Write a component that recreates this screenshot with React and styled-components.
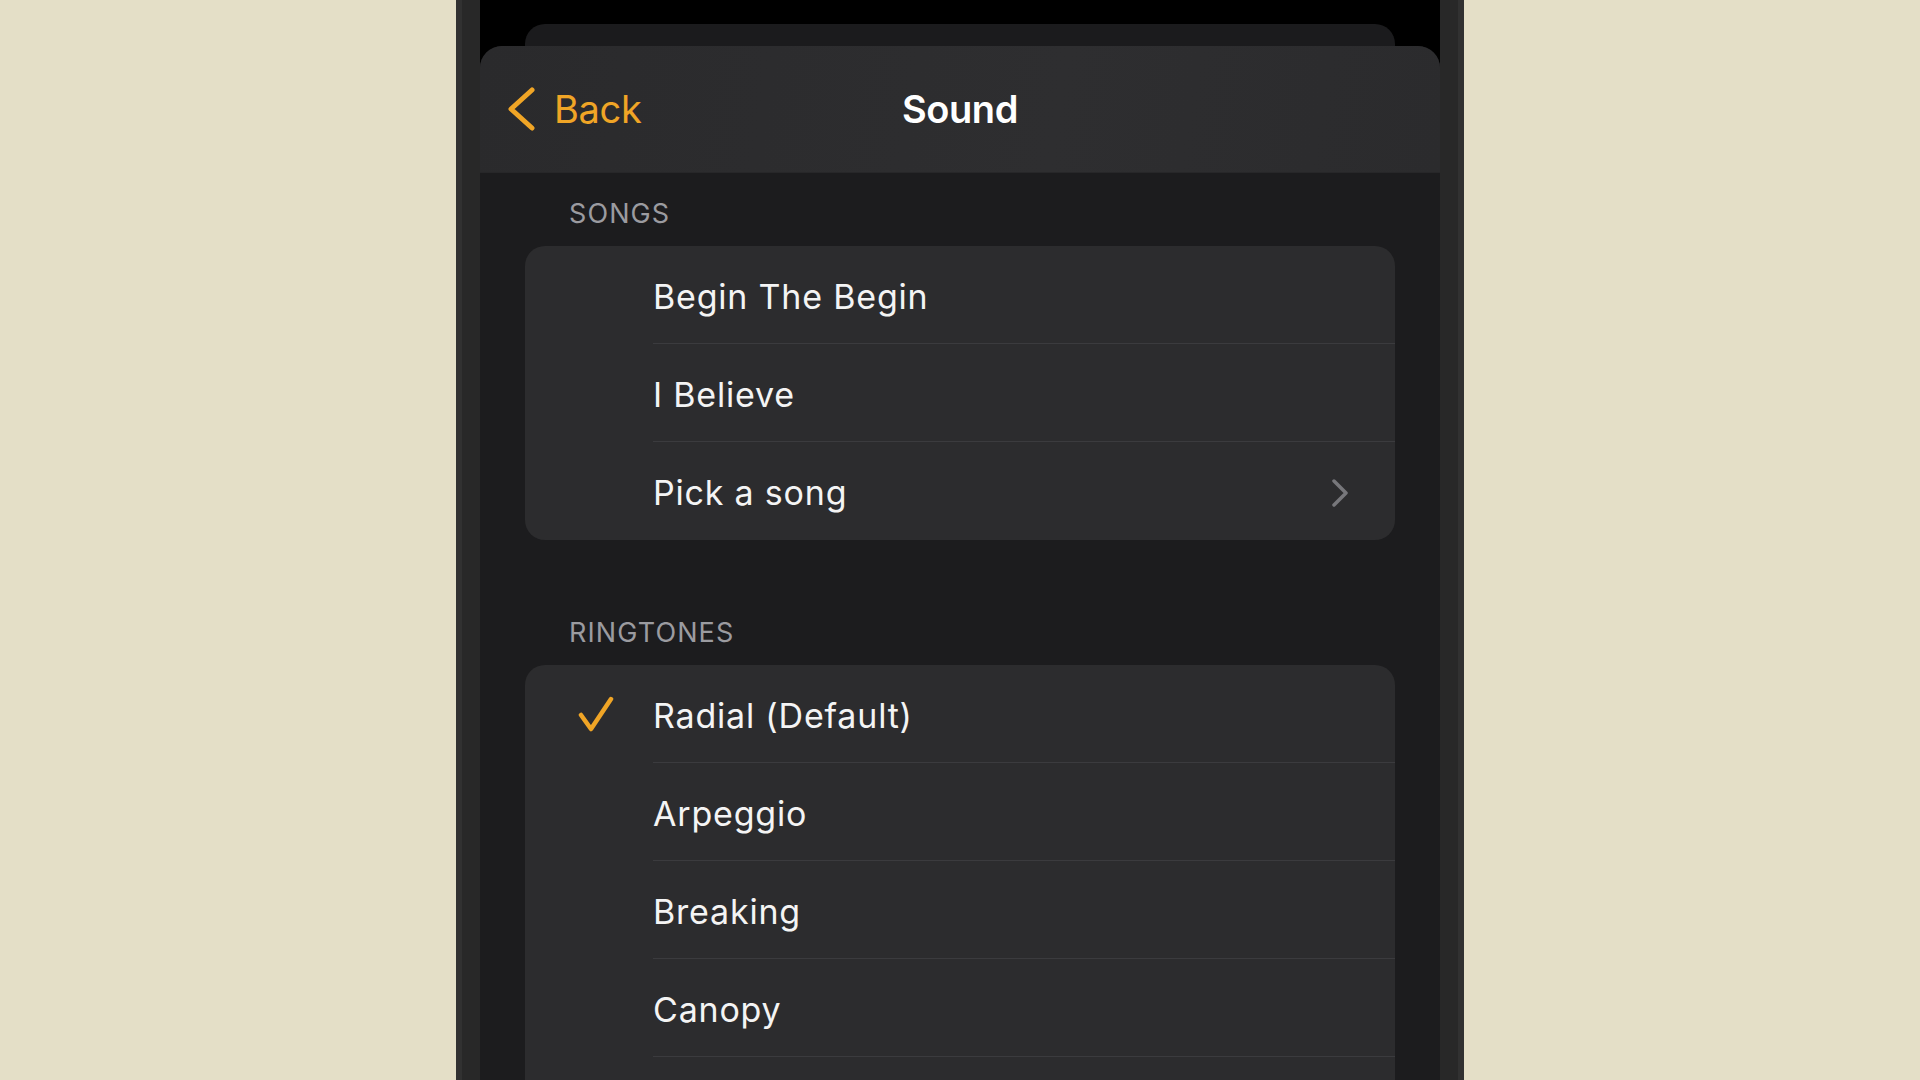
import React from "react";
import styled, { createGlobalStyle } from "styled-components";

const GlobalStyle = createGlobalStyle`
  html, body {
    margin: 0;
    padding: 0;
    background: #e4dfc7;
    font-family: Inter, "Noto Sans", "Liberation Sans", sans-serif;
    -webkit-font-smoothing: antialiased;
  }
  #root { height: 1080px; overflow: hidden; }
`;

const Page = styled.div`
  width: 1920px;
  height: 1080px;
  display: flex;
  justify-content: center;
  background: #e4dfc7;
  overflow: hidden;
`;

const PhoneFrame = styled.div`
  width: 1008px;
  height: 100%;
  box-sizing: border-box;
  padding: 0 24px;
  background: linear-gradient(
    to right,
    #313131 0 6px,
    #282828 6px calc(100% - 6px),
    #313131 calc(100% - 6px)
  );
`;

const Screen = styled.div`
  height: 100%;
  background: #000;
  display: flex;
  flex-direction: column;
  overflow: hidden;
`;

const StackedCard = styled.div`
  height: 22px;
  margin: 24px 45px 0;
  flex-shrink: 0;
  background: #1b1b1d;
  border-radius: 20px 20px 0 0;
`;

const Sheet = styled.div`
  flex: 1;
  display: flex;
  flex-direction: column;
  background: #1c1c1e;
  border-radius: 22px 22px 0 0;
  overflow: hidden;
`;

const NavBar = styled.header`
  height: 126px;
  flex-shrink: 0;
  position: relative;
  display: flex;
  align-items: center;
  justify-content: center;
  background: linear-gradient(100deg, #2a2a2c 0%, #2e2e30 60%, #2b2b2d 100%);
  box-shadow: 0 1px 0 rgba(255, 255, 255, 0.05);
`;

const BackButton = styled.button`
  position: absolute;
  left: 27px;
  top: 0;
  bottom: 0;
  display: flex;
  align-items: center;
  gap: 19px;
  padding: 0;
  border: 0;
  background: none;
  color: #f0a526;
  font-family: inherit;
  font-size: 38px;
  font-weight: 400;
  letter-spacing: -0.3px;
  cursor: pointer;
`;

const Title = styled.h1`
  margin: 0;
  color: #ffffff;
  font-size: 38px;
  font-weight: 600;
  letter-spacing: -0.4px;
`;

const Body = styled.div`
  padding: 25px 45px 0;
  display: flex;
  flex-direction: column;
`;

const SectionLabel = styled.div`
  margin: ${(p) => (p.$first ? "0" : "76px")} 0 15px 44px;
  height: 34px;
  line-height: 34px;
  font-size: 27px;
  color: #9b9ba0;
  letter-spacing: 1.1px;
`;

const Card = styled.div`
  background: #2c2c2e;
  border-radius: 20px;
  overflow: hidden;
  padding-bottom: ${(p) => (p.$continues ? "98px" : "0")};
`;

const Row = styled.div`
  display: flex;
  height: 98px;
`;

const MarkCell = styled.div`
  width: 128px;
  flex-shrink: 0;
  display: flex;
  align-items: center;
  padding-left: 53px;
  box-sizing: border-box;
`;

const RowContent = styled.div`
  flex: 1;
  display: flex;
  align-items: center;
  justify-content: space-between;
  padding: 3px 46px 0 0;
  box-sizing: border-box;
  border-bottom: ${(p) => (p.$divider ? "1px solid #3b3b3e" : "none")};
`;

const RowLabel = styled.span`
  color: #f4f4f4;
  font-size: 34px;
  letter-spacing: 0.8px;
`;

const BackChevron = () => (
  <svg width="28" height="44" viewBox="0 0 28 44" fill="none">
    <path
      d="M25 3 L4 22 L25 41"
      stroke="#f0a526"
      strokeWidth="5"
      strokeLinecap="round"
      strokeLinejoin="round"
    />
  </svg>
);

const Check = () => (
  <svg width="36" height="36" viewBox="0 0 36 36" fill="none">
    <path
      d="M3 19 L13 33 L33 3"
      stroke="#f0a526"
      strokeWidth="4.5"
      strokeLinecap="round"
      strokeLinejoin="round"
    />
  </svg>
);

const Disclosure = () => (
  <svg width="18" height="28" viewBox="0 0 18 28" fill="none">
    <path
      d="M3 2 L15 14 L3 26"
      stroke="#77777b"
      strokeWidth="3.5"
      strokeLinecap="round"
      strokeLinejoin="round"
    />
  </svg>
);

const songs = [
  { name: "Begin The Begin" },
  { name: "I Believe" },
  { name: "Pick a song", more: true },
];

const ringtones = [
  { name: "Radial (Default)", checked: true },
  { name: "Arpeggio" },
  { name: "Breaking" },
  { name: "Canopy" },
];

const List = ({ items, continues }) => (
  <Card $continues={continues}>
    {items.map((it, i) => (
      <Row key={it.name}>
        <MarkCell>{it.checked && <Check />}</MarkCell>
        <RowContent $divider={continues || i < items.length - 1}>
          <RowLabel>{it.name}</RowLabel>
          {it.more && <Disclosure />}
        </RowContent>
      </Row>
    ))}
  </Card>
);

export default function App() {
  return (
    <>
      <GlobalStyle />
      <Page>
        <PhoneFrame>
          <Screen>
            <StackedCard />
            <Sheet>
              <NavBar>
                <BackButton>
                  <BackChevron />
                  Back
                </BackButton>
                <Title>Sound</Title>
              </NavBar>
              <Body>
                <SectionLabel $first>SONGS</SectionLabel>
                <List items={songs} />
                <SectionLabel>RINGTONES</SectionLabel>
                <List items={ringtones} continues />
              </Body>
            </Sheet>
          </Screen>
        </PhoneFrame>
      </Page>
    </>
  );
}
